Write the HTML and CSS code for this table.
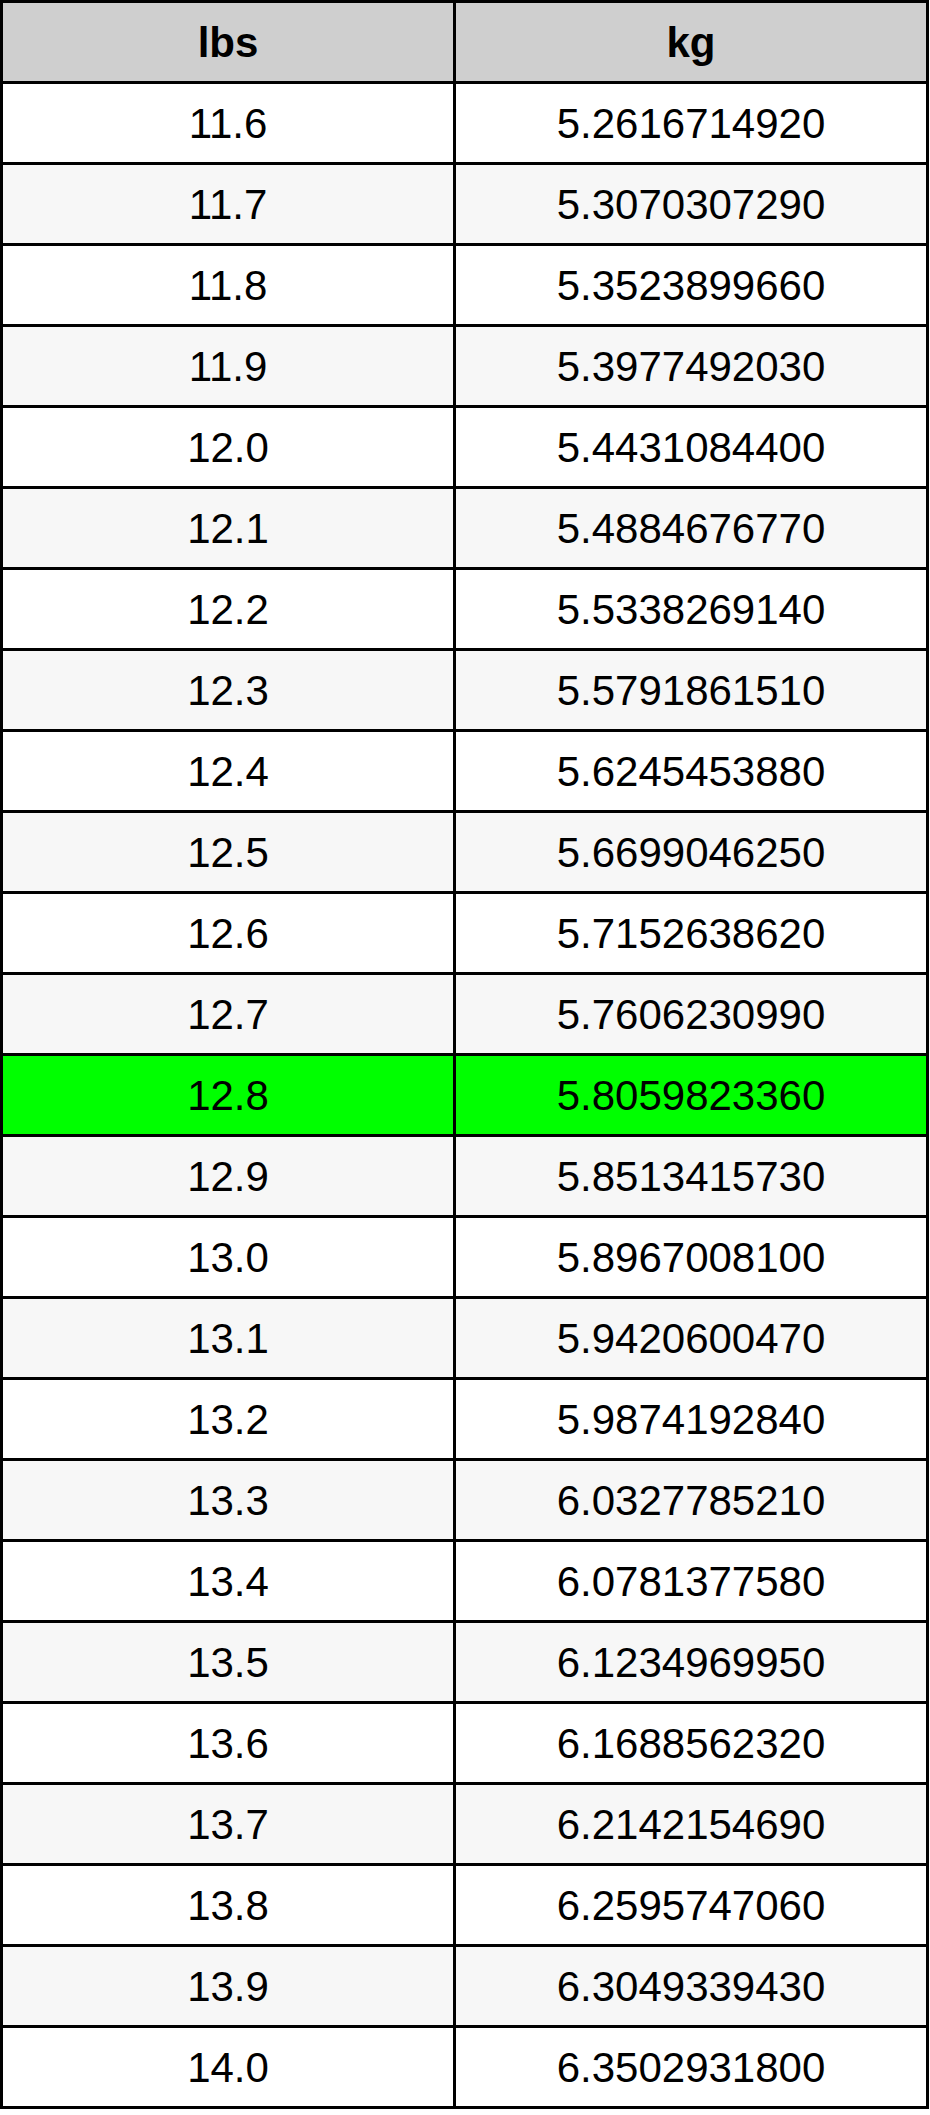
FILE: index.html
```html
<!DOCTYPE html>
<html lang="en">
<head>
<meta charset="utf-8">
<title>lbs to kg</title>
<link rel="stylesheet" href="styles.css">
</head>
<body>
<table class="conv">
  <colgroup><col class="c-lbs"><col class="c-kg"></colgroup>
  <thead>
    <tr><th>lbs</th><th>kg</th></tr>
  </thead>
  <tbody>
    <tr><td>11.6</td><td>5.2616714920</td></tr>
    <tr class="alt"><td>11.7</td><td>5.3070307290</td></tr>
    <tr><td>11.8</td><td>5.3523899660</td></tr>
    <tr class="alt"><td>11.9</td><td>5.3977492030</td></tr>
    <tr><td>12.0</td><td>5.4431084400</td></tr>
    <tr class="alt"><td>12.1</td><td>5.4884676770</td></tr>
    <tr><td>12.2</td><td>5.5338269140</td></tr>
    <tr class="alt"><td>12.3</td><td>5.5791861510</td></tr>
    <tr><td>12.4</td><td>5.6245453880</td></tr>
    <tr class="alt"><td>12.5</td><td>5.6699046250</td></tr>
    <tr><td>12.6</td><td>5.7152638620</td></tr>
    <tr class="alt"><td>12.7</td><td>5.7606230990</td></tr>
    <tr class="hl"><td>12.8</td><td>5.8059823360</td></tr>
    <tr class="alt"><td>12.9</td><td>5.8513415730</td></tr>
    <tr><td>13.0</td><td>5.8967008100</td></tr>
    <tr class="alt"><td>13.1</td><td>5.9420600470</td></tr>
    <tr><td>13.2</td><td>5.9874192840</td></tr>
    <tr class="alt"><td>13.3</td><td>6.0327785210</td></tr>
    <tr><td>13.4</td><td>6.0781377580</td></tr>
    <tr class="alt"><td>13.5</td><td>6.1234969950</td></tr>
    <tr><td>13.6</td><td>6.1688562320</td></tr>
    <tr class="alt"><td>13.7</td><td>6.2142154690</td></tr>
    <tr><td>13.8</td><td>6.2595747060</td></tr>
    <tr class="alt"><td>13.9</td><td>6.3049339430</td></tr>
    <tr><td>14.0</td><td>6.3502931800</td></tr>
  </tbody>
</table>
</body>
</html>
```

FILE: styles.css
```css
html, body {
  margin: 0;
  padding: 0;
  background: #ffffff;
}

.conv {
  width: 929px;
  table-layout: fixed;
  border-collapse: separate;
  border-spacing: 0;
  border-top: 3px solid #000;
  border-left: 3px solid #000;
  font-family: "Liberation Sans", Arial, sans-serif;
  font-size: 42px;
  color: #000;
}

.c-lbs { width: 453px; }
.c-kg { width: 473px; }

.conv th,
.conv td {
  box-sizing: border-box;
  height: 81px;
  padding: 1px 0 0 0;
  line-height: 77px;
  text-align: center;
  vertical-align: middle;
  border-right: 3px solid #000;
  border-bottom: 3px solid #000;
  background: #ffffff;
}

.conv th {
  font-weight: bold;
  background: #cfcfcf;
}

.conv tr.alt td {
  background: #f7f7f7;
}

.conv tr.hl td {
  background: #00ff00;
}
```
